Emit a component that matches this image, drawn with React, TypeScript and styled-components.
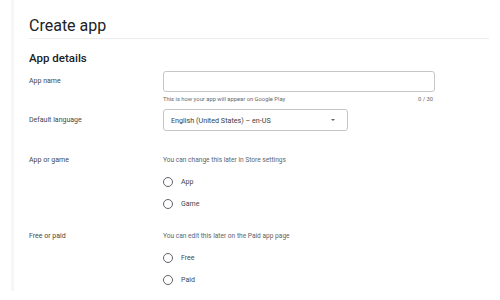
import React from "react";
import styled, {createGlobalStyle} from "styled-components";

const GlobalStyle = createGlobalStyle`
  body {
    margin: 0;
    background: #ffffff;
    font-family: Roboto, "Liberation Sans", sans-serif;
    color: #202124;
  }
`;

const Page = styled.div`
  width: 500px;
  height: 300px;
  overflow: hidden;
  background: #ffffff;
`;

const Sheet = styled.div`
  margin-left: 11px;
  height: 291px;
  border-left: 3px solid #f6f6f8;
  padding: 0 11px 0 15px;
  box-sizing: border-box;
`;

const Title = styled.h1`
  margin: 0;
  padding-top: 13px;
  height: 25px;
  font-size: 16px;
  font-weight: 400;
  line-height: 26px;
  color: #202124;
  border-bottom: 1px solid #ebebeb;
`;

const SectionTitle = styled.h2`
  margin: 0;
  padding-top: 11px;
  font-size: 11.5px;
  font-weight: 500;
  line-height: 16px;
  color: #202124;
`;

const Row = styled.div<{ $top: number }>`
  display: grid;
  grid-template-columns: 134px 272px;
  margin-top: ${p => p.$top}px;
`;

const Label = styled.div<{ $pad?: number }>`
  font-size: 7px;
  line-height: 10px;
  color: #444746;
  padding-top: ${p => p.$pad ?? 0}px;
`;

const Field = styled.div`
  display: flex;
  flex-direction: column;
`;

const TextBox = styled.div`
  height: 21px;
  border: 1px solid #c4c7c9;
  border-radius: 3px;
  box-sizing: border-box;
`;

const Helper = styled.div`
  display: flex;
  justify-content: space-between;
  margin-top: 3px;
  padding-right: 2px;
  font-size: 5.8px;
  line-height: 8px;
  color: #666a6d;
`;

const SelectBox = styled.div`
  width: 185px;
  height: 22px;
  border: 1px solid #c4c7c9;
  border-radius: 3px;
  box-sizing: border-box;
  display: flex;
  align-items: center;
  justify-content: space-between;
  padding: 0 12px 0 7px;
  font-size: 7.2px;
  color: #3c4043;
`;

const Caret = styled.span`
  width: 0;
  height: 0;
  border-left: 2.5px solid transparent;
  border-right: 2.5px solid transparent;
  border-top: 2.5px solid #5f6368;
`;

const Hint = styled.div`
  font-size: 6.6px;
  line-height: 10px;
  color: #5f6368;
`;

const RadioList = styled.div`
  display: flex;
  flex-direction: column;
  gap: 12px;
  margin-top: 12px;
`;

const RadioRow = styled.label`
  display: flex;
  align-items: center;
  gap: 8px;
  height: 10px;
  font-size: 7px;
  color: #444746;
`;

const RadioCircle = styled.span`
  width: 10px;
  height: 10px;
  border: 1.3px solid #5f6368;
  border-radius: 50%;
  box-sizing: border-box;
`;

function Radio({label}: { label: string }) {
    return (
        <RadioRow>
            <RadioCircle/>
            {label}
        </RadioRow>
    );
}

export default function App() {
    return (
        <Page>
            <GlobalStyle/>
            <Sheet>
                <Title>Create app</Title>
                <SectionTitle>App details</SectionTitle>
                <Row $top={5}>
                    <Label $pad={5}>App name</Label>
                    <Field>
                        <TextBox/>
                        <Helper>
                            <span>This is how your app will appear on Google Play</span>
                            <span>0 / 30</span>
                        </Helper>
                    </Field>
                </Row>
                <Row $top={6}>
                    <Label $pad={6}>Default language</Label>
                    <Field>
                        <SelectBox>
                            <span>English (United States) – en-US</span>
                            <Caret/>
                        </SelectBox>
                    </Field>
                </Row>
                <Row $top={24}>
                    <Label>App or game</Label>
                    <Field>
                        <Hint>You can change this later in Store settings</Hint>
                        <RadioList>
                            <Radio label="App"/>
                            <Radio label="Game"/>
                        </RadioList>
                    </Field>
                </Row>
                <Row $top={22}>
                    <Label>Free or paid</Label>
                    <Field>
                        <Hint>You can edit this later on the Paid app page</Hint>
                        <RadioList>
                            <Radio label="Free"/>
                            <Radio label="Paid"/>
                        </RadioList>
                    </Field>
                </Row>
            </Sheet>
        </Page>
    );
}
